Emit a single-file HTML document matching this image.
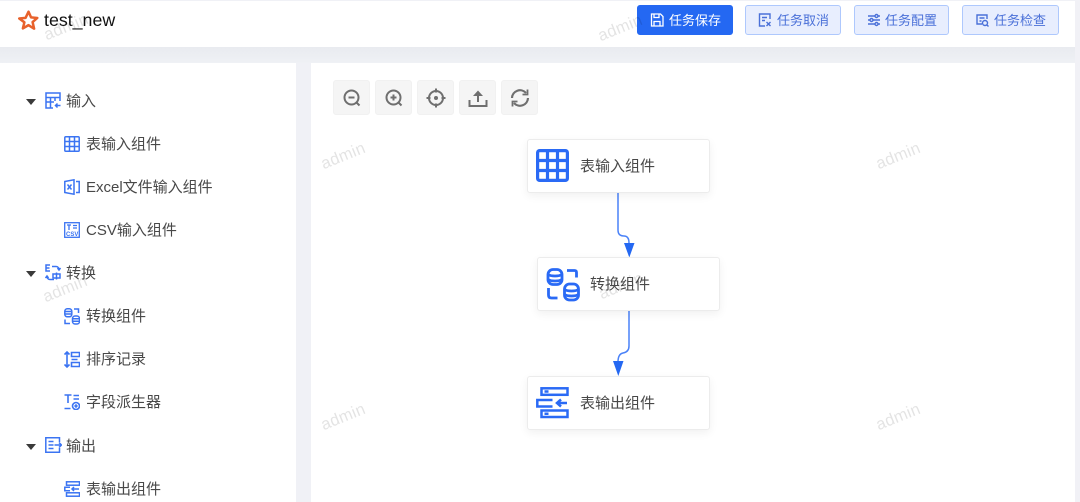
<!DOCTYPE html>
<html><head><meta charset="utf-8">
<style>
*{box-sizing:border-box}
html,body{margin:0;padding:0}
body{width:1080px;height:502px;overflow:hidden;position:relative;background:#f0f1f6;font-family:"Liberation Sans","Noto Sans CJK SC",sans-serif}
#w{position:absolute;left:0;top:0;width:1080px;height:502px;filter:blur(.35px)}
.abs{position:absolute}
#band{left:0;top:47px;width:1075px;height:16px;background:linear-gradient(#e9ebf0,#eff1f5)}
#hdr{left:0;top:1px;width:1075px;height:46px;background:#fff}
#strip{left:1075px;top:0;width:5px;height:502px;background:#f1f1f6}
#side{left:0;top:63px;width:296px;height:439px;background:#fff}
#canvas{left:311px;top:63px;width:764px;height:439px;background:#fff}
.btn{top:5px;height:30px;border-radius:3px;background:#e8eefe;border:1px solid #aec8fd;color:#4a70d8;font-size:13px;line-height:30px;white-space:nowrap}
.btn span{position:absolute;top:0}
.btn svg{position:absolute;top:6px}
.btn.p{background:#2468f2;border-color:#2468f2;color:#fff}
.tb{top:80px;width:37px;height:35px;background:#f5f5f5;border-radius:3px;border:1px solid #f1f1f1}
.tb svg{position:absolute;left:8px;top:7px}
.t{position:absolute;font-size:15px;line-height:20px;color:#484848;white-space:nowrap;margin-top:1px}
.ic{position:absolute}
.node{background:#fff;border:1px solid #ececec;border-radius:3px;box-shadow:0 3px 9px rgba(0,0,0,.06);width:183px;height:54px}
.wm{position:absolute;color:rgba(0,0,0,.11);font-size:16.500px;line-height:20px;transform:rotate(-22deg);white-space:nowrap;letter-spacing:.3px}
.arr{position:absolute;left:26px;width:0;height:0;border-left:5px solid transparent;border-right:5px solid transparent;border-top:6px solid #3a3a3a}
</style></head><body><div id="w">
<div class="abs" id="band"></div>
<div class="abs" id="hdr"></div>
<div class="abs" id="strip"></div>
<div class="abs" id="side"></div>
<div class="abs" id="canvas"></div>

<svg class="ic" style="left:16px;top:9px" width="24" height="24" viewBox="0 0 22 22"><path d="M11.500 2.500l2.300 5.200 5.700.5-4.300 3.800 1.400 6-5.100-3.200-5.200 3 1.400-5.600L3 8.700l5.800-.6z" fill="none" stroke="#e8622c" stroke-width="2.300" stroke-linejoin="round"/></svg>
<div class="t" style="left:44px;top:9px;font-size:17.800px;color:#111;line-height:20px">test_new</div>

<div class="btn p abs" style="left:637px;width:96px"><svg style="left:11px" width="16" height="16" viewBox="0 0 16 16" fill="none" stroke="#fff" stroke-width="1.300"><path d="M2.500 2h9l2.500 2.500V14H2.500z"/><path d="M5 2v3.500h5V2M5 14V9.500h6V14"/></svg><span style="left:31px">任务保存</span></div>
<div class="btn abs" style="left:745px;width:96px"><svg style="left:11px" width="16" height="16" viewBox="0 0 16 16" fill="none" stroke="#4a70d8" stroke-width="1.400"><path d="M13 7V2H2.500v12H8M5 5.500h5M5 8.500h3M9.500 10l4 4M13.500 10l-4 4"/></svg><span style="left:31px">任务取消</span></div>
<div class="btn abs" style="left:854px;width:95px"><svg style="left:11px" width="16" height="16" viewBox="0 0 16 16" fill="none" stroke="#4a70d8" stroke-width="1.400"><path d="M2 4h7M12 4h2M2 8h2M7 8h7M2 12h7M12 12h2"/><circle cx="10.500" cy="4" r="1.500"/><circle cx="5.500" cy="8" r="1.500"/><circle cx="10.500" cy="12" r="1.500"/></svg><span style="left:30px">任务配置</span></div>
<div class="btn abs" style="left:962px;width:97px"><svg style="left:11px" width="16" height="16" viewBox="0 0 16 16" fill="none" stroke="#4a70d8" stroke-width="1.400"><path d="M13 7V3H3v9h5M5.500 6h5M5.500 9h2"/><circle cx="11" cy="11" r="2.500"/><path d="M13 13l1.500 1.500"/></svg><span style="left:31px">任务检查</span></div>

<div class="tb abs" style="left:333px"><svg width="20" height="20" viewBox="0 0 20 20" fill="none" stroke="#6f6f6f" stroke-width="2"><circle cx="9.500" cy="9.500" r="7"/><path d="M6.500 9.500h6M14.500 14.500l3 3"/></svg></div>
<div class="tb abs" style="left:375px"><svg width="20" height="20" viewBox="0 0 20 20" fill="none" stroke="#6f6f6f" stroke-width="2"><circle cx="9.500" cy="9.500" r="7"/><path d="M6.500 9.500h6M9.500 6.500v6M14.500 14.500l3 3"/></svg></div>
<div class="tb abs" style="left:417px"><svg width="20" height="20" viewBox="0 0 20 20" fill="none" stroke="#6f6f6f" stroke-width="2"><circle cx="10" cy="10" r="7"/><path d="M10 .5v4M10 15.500v4M.5 10h4M15.500 10h4"/><circle cx="10" cy="10" r="2" fill="#6f6f6f" stroke="none"/></svg></div>
<div class="tb abs" style="left:459px"><svg width="20" height="20" viewBox="0 0 20 20" fill="none" stroke="#6f6f6f" stroke-width="2"><path d="M1.500 12v6h17v-6M10 14V6"/><path d="M5 8L10 2.500 15 8z" fill="#6f6f6f" stroke="none"/></svg></div>
<div class="tb abs" style="left:501px"><svg width="20" height="20" viewBox="0 0 20 20" fill="none" stroke="#6f6f6f" stroke-width="2.200"><path d="M2 10a8 8 0 0 1 14-5M18 10a8 8 0 0 1-14 5"/><path d="M17.500 1.500v5h-5M2.500 18.500v-5h5" stroke-width="1.800"/></svg></div>

<div class="arr" style="top:99px"></div>
<svg class="ic" style="left:45px;top:92px" width="16" height="17" viewBox="0 0 16 17" fill="none" stroke="#3b74f2" stroke-width="1.500"><path d="M15 9V1H1v15h7M1 5.500h14M1 10h8M5.500 5.500V16M10 5.500V9"/><path d="M15.500 13.500h-5M12.500 11.500l-2 2 2 2"/></svg>
<div class="t" style="left:66px;top:91px">输入</div>

<svg class="ic" style="left:64px;top:136px" width="16" height="16" viewBox="0 0 16 16" fill="none" stroke="#3b74f2" stroke-width="1.500"><rect x=".8" y=".8" width="14.400" height="14.400" rx="1"/><path d="M5.500 1v14M10.500 1v14M1 5.500h14M1 10.500h14"/></svg>
<div class="t" style="left:86px;top:134px">表输入组件</div>

<svg class="ic" style="left:64px;top:179px" width="16" height="16" viewBox="0 0 16 16" fill="none" stroke="#3b74f2" stroke-width="1.500"><path d="M.8 2.500L10 .8v14.400L.8 13.500z"/><path d="M12 2.500h3.200v11H12M3.500 5.500l4 5M7.500 5.500l-4 5"/></svg>
<div class="t" style="left:86px;top:177px">Excel文件输入组件</div>

<svg class="ic" style="left:64px;top:222px" width="16" height="16" viewBox="0 0 16 16" fill="none" stroke="#3b74f2" stroke-width="1.300"><rect x=".7" y=".7" width="14.600" height="14.600"/><path d="M3 3h4M5 3v5M9 3.500h4M9 6h4"/><text x="2" y="14" font-size="6" fill="#3b74f2" stroke="none" font-family="Liberation Sans" font-weight="bold">CSV</text></svg>
<div class="t" style="left:86px;top:220px">CSV输入组件</div>

<div class="arr" style="top:271px"></div>
<svg class="ic" style="left:45px;top:264px" width="16" height="18" viewBox="0 0 16 18" fill="none" stroke="#3b74f2" stroke-width="1.500"><path d="M5 1H1v6h4M1 4h3.500M7 2.500h4a3 3 0 0 1 3 3M12.500 4l1.500 2 1.500-2M9 15.500H5a3 3 0 0 1-3-3M.5 14l1.500-2 1.500 2"/><path d="M8 10h7v4H8zM11.500 8.500v7"/></svg>
<div class="t" style="left:66px;top:263px">转换</div>

<svg class="ic" style="left:64px;top:308px" width="16" height="17" viewBox="0 0 16 17" fill="none" stroke="#3b74f2" stroke-width="1.500"><rect x=".8" y=".8" width="7" height="8" rx="2.500"/><path d="M1 3.500h6M1 6h6"/><rect x="8.500" y="8" width="7" height="8" rx="2.500"/><path d="M9 10.700h6M9 13.300h6M10 1h4.500v4M1 11.500V15.500H6"/></svg>
<div class="t" style="left:86px;top:306px">转换组件</div>

<svg class="ic" style="left:64px;top:351px" width="16" height="17" viewBox="0 0 16 17" fill="none" stroke="#3b74f2" stroke-width="1.600"><path d="M3 1v15M.5 3.500L3 1l2.500 2.500M.5 13.500L3 16l2.500-2.500"/><path d="M7.500 1.500h8v4h-8zM7.500 11.500h8v4h-8zM7.500 8.500h6"/></svg>
<div class="t" style="left:86px;top:349px">排序记录</div>

<svg class="ic" style="left:64px;top:394px" width="16" height="16" viewBox="0 0 16 16" fill="none" stroke="#3b74f2" stroke-width="1.600"><path d="M.5 1h7M4 1v8M9.500 1.500H15M9.500 5H15M.5 14.500h6"/><circle cx="12" cy="12" r="3.500"/><path d="M10.300 12h3.400M12 10.300v3.400"/></svg>
<div class="t" style="left:86px;top:392px">字段派生器</div>

<div class="arr" style="top:444px"></div>
<svg class="ic" style="left:45px;top:437px" width="17" height="16" viewBox="0 0 17 16" fill="none" stroke="#3b74f2" stroke-width="1.500"><path d="M14.500 5V.8H.8v14.400h13.700V11M3.500 4.500h5M3.500 8h5M3.500 11.500h5M9.500 8h7M14 5.500L16.500 8 14 10.500"/></svg>
<div class="t" style="left:66px;top:436px">输出</div>

<svg class="ic" style="left:64px;top:481px" width="16" height="16" viewBox="0 0 16 16" fill="none" stroke="#3b74f2" stroke-width="1.500"><rect x="2.500" y=".8" width="13" height="3.400"/><rect x="2.500" y="11.800" width="13" height="3.400"/><path d="M6 6.200H.8v3.600H6M15 8H8M10 6l-2 2 2 2"/></svg>
<div class="t" style="left:86px;top:479px">表输出组件</div>

<div class="wm" style="left:43px;top:17px">admin</div>
<div class="wm" style="left:597px;top:18px">admin</div>
<div class="wm" style="left:42px;top:279px">admin</div>
<div class="wm" style="left:320px;top:146px">admin</div>
<div class="wm" style="left:875px;top:146px">admin</div>
<div class="wm" style="left:320px;top:407px">admin</div>
<div class="wm" style="left:875px;top:407px">admin</div>

<svg class="abs" style="left:0;top:0" width="1080" height="502" fill="none" stroke="#4a82f8" stroke-width="1.500">
<path d="M618 192V230Q618 236 624 236Q629 236 629 243"/>
<path d="M629 310V346Q629 352 623 353Q618 354 618 362"/>
<path d="M624 243h10.500l-5.200 14.500z" fill="#2468f2" stroke="none"/>
<path d="M613 361h10.500l-5.200 15z" fill="#2468f2" stroke="none"/>
</svg>

<div class="node abs" style="left:527px;top:139px"></div>
<svg class="ic" style="left:536px;top:149px" width="33" height="33" viewBox="0 0 33 33"><rect x="1.600" y="1.600" width="29.800" height="29.800" rx="2" fill="#fff" stroke="#2a6af5" stroke-width="3.200"/><path d="M11.500 2v29M21.500 2v29M2 11.500h29M2 21.500h29" stroke="#2a6af5" stroke-width="3.200"/></svg>
<div class="t" style="left:580px;top:156px">表输入组件</div>

<div class="node abs" style="left:537px;top:257px"></div>
<svg class="ic" style="left:546px;top:268px" width="34" height="34" viewBox="0 0 34 34" fill="none" stroke="#2a6af5" stroke-width="2.800"><rect x="2" y="1.500" width="14" height="15" rx="5"/><path d="M2 6.500c3 2 11 2 14 0M2 11.500c3 2 11 2 14 0"/><rect x="18.500" y="16" width="14" height="16" rx="5"/><path d="M18.500 21.500c3 2 11 2 14 0M18.500 26.500c3 2 11 2 14 0"/><path d="M21 2.500h7.500q2 0 2 2v5M2.500 20v7q0 3 3 3h6"/></svg>
<div class="wm" style="left:598px;top:276px">admin</div>
<div class="t" style="left:590px;top:274px">转换组件</div>

<div class="node abs" style="left:527px;top:376px"></div>
<svg class="ic" style="left:536px;top:387px" width="33" height="32" viewBox="0 0 33 32" fill="none" stroke="#2a6af5" stroke-width="2.500"><rect x="5.500" y="1.300" width="26" height="6.500"/><rect x="5.500" y="23.500" width="26" height="6.500"/><path d="M8.500 4.500h4M8.500 26.700h4"/><path d="M16.500 13H1.300v6.500H16.500M31 16H22M25 12.500L21 16l4 3.500"/></svg>
<div class="t" style="left:580px;top:393px">表输出组件</div>
</div></body></html>
